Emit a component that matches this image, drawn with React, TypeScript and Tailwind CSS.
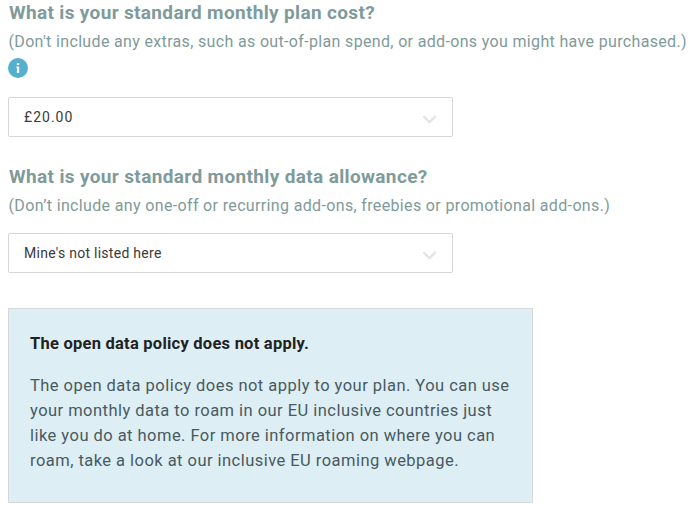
import React from 'react'

const Chevron = () => (
  <svg className="mt-[4px] h-[9px] w-[15px]" viewBox="0 0 15 9" fill="none" stroke="#e4e4e4" strokeWidth="2.4">
    <path d="M1.2 1l6.3 6L13.8 1" />
  </svg>
)

const InfoIcon = () => (
  <svg className="h-5 w-5" viewBox="0 0 20 20">
    <circle cx="10" cy="10" r="10" fill="#54b0ce" />
    <path d="M8.9 5h2.3v2.1H8.9zM8.2 8.4h3V15H8.9V9.7h-.7z" fill="#fff" />
  </svg>
)

const SelectBox = ({ value, spacing }: { value: string, spacing: string }) => (
  <button className="flex h-10 w-[445px] items-center justify-between rounded-[2px] border border-[#d6d6d6] bg-white px-[15px] text-[14px] text-[#3a3a3a]">
    <span className={'whitespace-nowrap ' + spacing}>{value}</span>
    <Chevron />
  </button>
)

const App = () => {
  return (
    <div className="h-[509px] overflow-hidden bg-white pl-2 font-['Roboto',sans-serif] text-[#7f9a9a]">
      <h2 className="pl-px text-[19px] leading-[26px] font-bold tracking-[0.34px] whitespace-nowrap">What is your standard monthly plan cost?</h2>
      <p className="pt-px pl-[0.5px] text-[16px] leading-[30px] tracking-[0.34px] whitespace-nowrap">(Don't include any extras, such as out-of-plan spend, or add-ons you might have purchased.)</p>
      <div className="mt-px mb-[19px] h-5">
        <InfoIcon />
      </div>
      <SelectBox value="£20.00" spacing="tracking-[1px]" />

      <h2 className="mt-[27px] pl-px text-[19px] leading-[26px] font-bold tracking-[0.36px] whitespace-nowrap">What is your standard monthly data allowance?</h2>
      <p className="pt-px pl-[0.5px] text-[16px] leading-[30px] tracking-[0.35px] whitespace-nowrap">(Don’t include any one-off or recurring add-ons, freebies or promotional add-ons.)</p>
      <div className="mt-[12px]">
        <SelectBox value="Mine's not listed here" spacing="tracking-[0.27px]" />
      </div>

      <div className="mt-[35px] h-[195px] w-[525px] border border-[#d6d9da] bg-[#deeef5] pt-[22px] pl-[21px]">
        <h3 className="text-[16.5px] leading-[26px] font-bold tracking-[0.24px] text-[#222] whitespace-nowrap">The open data policy does not apply.</h3>
        <p className="mt-[16px] text-[16.5px] leading-[25px] tracking-[0.46px] text-[#485a60] whitespace-nowrap">
          The open data policy does not apply to your plan. You can use<br />
          your monthly data to roam in our EU inclusive countries just<br />
          like you do at home. For more information on where you can<br />
          roam, take a look at our inclusive EU roaming webpage.
        </p>
      </div>
    </div>
  )
}

export default App
